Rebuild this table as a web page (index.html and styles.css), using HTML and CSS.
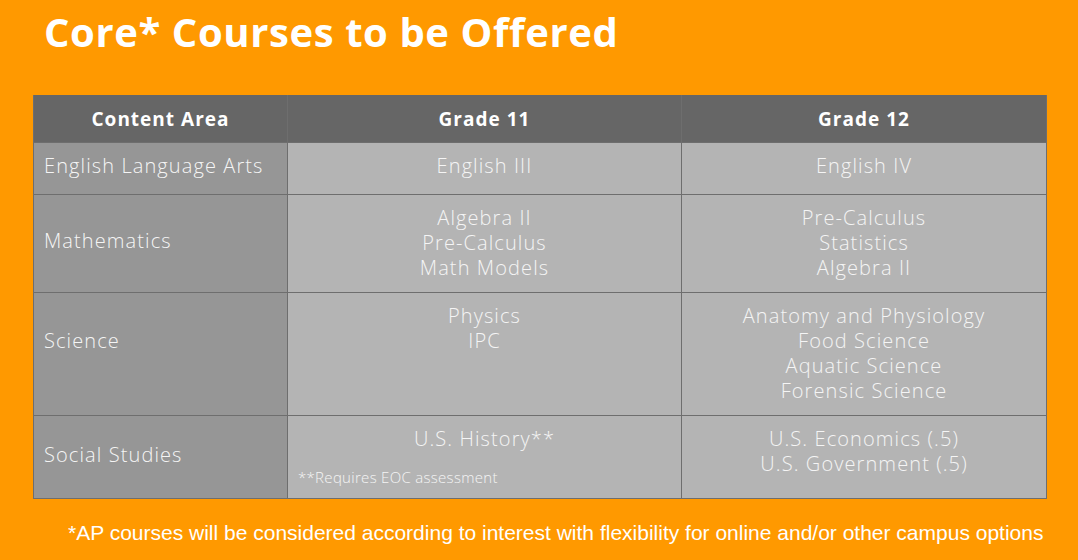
FILE: index.html
```html
<!DOCTYPE html>
<html>
<head>
<meta charset="utf-8">
<link rel="stylesheet" href="styles.css">
</head>
<body>
<div class="slide">
  <h1 class="title">Core* Courses to be Offered</h1>
  <table class="courses">
    <colgroup>
      <col class="c1"><col class="c2"><col class="c3">
    </colgroup>
    <thead>
      <tr><th>Content Area</th><th>Grade 11</th><th>Grade 12</th></tr>
    </thead>
    <tbody>
      <tr class="r1">
        <td class="area">English Language Arts</td>
        <td>English III</td>
        <td>English IV</td>
      </tr>
      <tr class="r2">
        <td class="area">Mathematics</td>
        <td>Algebra II<br>Pre-Calculus<br>Math Models</td>
        <td>Pre-Calculus<br>Statistics<br>Algebra II</td>
      </tr>
      <tr class="r3">
        <td class="area area-sci">Science</td>
        <td>Physics<br>IPC</td>
        <td>Anatomy and Physiology<br>Food Science<br>Aquatic Science<br>Forensic Science</td>
      </tr>
      <tr class="r4">
        <td class="area">Social Studies</td>
        <td>U.S. History**<div class="note">**Requires EOC assessment</div></td>
        <td>U.S. Economics (.5)<br>U.S. Government (.5)</td>
      </tr>
    </tbody>
  </table>
  <p class="footer">*AP courses will be considered according to interest with flexibility for online and/or other campus options</p>
</div>
</body>
</html>
```
FILE: styles.css
```css
html, body {
  margin: 0;
  padding: 0;
  background: #ff9900;
}
.slide {
  width: 1078px;
  height: 560px;
  overflow: hidden;
  font-family: "Open Sans", "DejaVu Sans", sans-serif;
  color: #f5f5f5;
}
.title {
  margin: 0;
  padding: 8px 0 0 44px;
  height: 95px;
  box-sizing: border-box;
  font-size: 40px;
  font-weight: 700;
  letter-spacing: 0.6px;
  color: #ffffff;
  line-height: 48px;
}
.courses {
  margin-left: 33px;
  width: 1013px;
  border-collapse: collapse;
  table-layout: fixed;
}
.c1 { width: 254px; }
.c2 { width: 394px; }
.c3 { width: 365px; }
.courses th {
  background: #666666;
  color: #ffffff;
  font-size: 19px;
  font-weight: 700;
  letter-spacing: 1px;
  height: 47px;
  padding: 0;
  text-align: center;
  border-left: 1px solid #6e6e6e;
  border-right: 1px solid #6e6e6e;
}
.courses td {
  background: #b4b4b4;
  border: 1px solid #6e6e6e;
  font-size: 20px;
  font-weight: 300;
  letter-spacing: 1.1px;
  line-height: 25px;
  text-align: center;
  vertical-align: top;
  padding: 10px 8px 12px 8px;
}
.r1 td { height: 29px; }
.courses td.area {
  background: #969696;
  text-align: left;
  vertical-align: middle;
  padding-left: 10px;
  padding-top: 8px;
  padding-bottom: 14px;
}
.courses td.area-sci {
  padding-bottom: 36px;
}
.r4 td { height: 60px; }
.note {
  text-align: left;
  font-size: 15px;
  letter-spacing: 0.3px;
  line-height: 18px;
  margin-top: 17px;
  margin-left: 2px;
}
.footer {
  margin: 22px 0 0 0;
  padding-left: 68px;
  font-family: "Liberation Sans", Arial, sans-serif;
  font-size: 21px;
  line-height: 24px;
  color: #ffffff;
}
```
